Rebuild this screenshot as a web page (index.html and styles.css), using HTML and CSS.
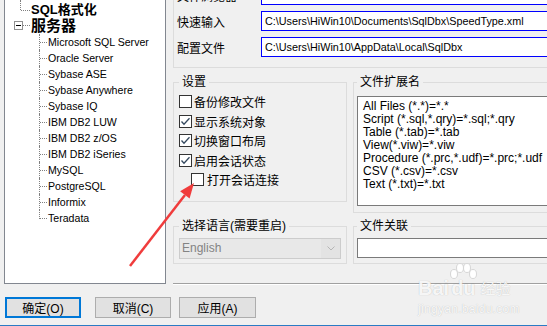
FILE: index.html
```html
<!DOCTYPE html>
<html lang="zh">
<head>
    <meta charset="UTF-8">
    <title>选项</title>
    <link rel="stylesheet" href="styles.css">
</head>
<body>
    <div class="dialog">
        <div class="main">
            <div class="tree">
                <ul class="tree-root">
                    <li class="tree-node first-node">
                        <div class="row"><span class="bold">SQL格式化</span></div>
                    </li>
                    <li class="tree-node open-node">
                        <div class="row"><span class="toggle"></span><span class="bold big">服务器</span></div>
                        <ul class="tree-children">
                            <li><div class="row">Microsoft SQL Server</div></li>
                            <li><div class="row">Oracle Server</div></li>
                            <li><div class="row">Sybase ASE</div></li>
                            <li><div class="row">Sybase Anywhere</div></li>
                            <li><div class="row">Sybase IQ</div></li>
                            <li><div class="row">IBM DB2 LUW</div></li>
                            <li><div class="row">IBM DB2 z/OS</div></li>
                            <li><div class="row">IBM DB2 iSeries</div></li>
                            <li><div class="row">MySQL</div></li>
                            <li><div class="row">PostgreSQL</div></li>
                            <li><div class="row">Informix</div></li>
                            <li><div class="row">Teradata</div></li>
                        </ul>
                    </li>
                </ul>
            </div>

            <div class="settings">
                <div class="paths">
                    <div class="path-row">
                        <label>文件浏览器</label>
                        <input class="path-field" type="text" value="C:\Users\HiWin10\Documents" readonly>
                    </div>
                    <div class="path-row">
                        <label>快速输入</label>
                        <input class="path-field" type="text" value="C:\Users\HiWin10\Documents\SqlDbx\SpeedType.xml" readonly>
                    </div>
                    <div class="path-row">
                        <label>配置文件</label>
                        <input class="path-field" type="text" value="C:\Users\HiWin10\AppData\Local\SqlDbx" readonly>
                    </div>
                </div>

                <div class="group-row">
                    <fieldset class="group options-group">
                        <legend>设置</legend>
                        <label class="check"><span class="box"></span>备份修改文件</label>
                        <label class="check"><span class="box"><svg width="11" height="11" viewBox="0 0 11 11"><polyline points="1.5,5.5 4,8.2 9.5,2.2" fill="none" stroke="#34495f" stroke-width="1.3"/></svg></span>显示系统对象</label>
                        <label class="check"><span class="box"><svg width="11" height="11" viewBox="0 0 11 11"><polyline points="1.5,5.5 4,8.2 9.5,2.2" fill="none" stroke="#34495f" stroke-width="1.3"/></svg></span>切换窗口布局</label>
                        <label class="check"><span class="box"><svg width="11" height="11" viewBox="0 0 11 11"><polyline points="1.5,5.5 4,8.2 9.5,2.2" fill="none" stroke="#34495f" stroke-width="1.3"/></svg></span>启用会话状态</label>
                        <label class="check sub"><span class="box"></span>打开会话连接</label>
                    </fieldset>
                    <fieldset class="group ext-group">
                        <legend>文件扩展名</legend>
                        <div class="ext-list">
                            <div>All Files (*.*)=*.*</div>
                            <div>Script (*.sql,*.qry)=*.sql;*.qry</div>
                            <div>Table (*.tab)=*.tab</div>
                            <div>View(*.viw)=*.viw</div>
                            <div>Procedure (*.prc,*.udf)=*.prc;*.udf</div>
                            <div>CSV (*.csv)=*.csv</div>
                            <div>Text (*.txt)=*.txt</div>
                        </div>
                    </fieldset>
                </div>

                <div class="group-row lower">
                    <fieldset class="group lang-group">
                        <legend>选择语言(需要重启)</legend>
                        <div class="combo">
                            <span class="combo-text">English</span>
                            <span class="combo-arrow"><svg width="8" height="5" viewBox="0 0 8 5"><polyline points="0.5,0.5 4,4 7.5,0.5" fill="none" stroke="#b5b5b5" stroke-width="1"/></svg></span>
                        </div>
                    </fieldset>
                    <fieldset class="group assoc-group">
                        <legend>文件关联</legend>
                        <div class="assoc-field"></div>
                    </fieldset>
                </div>
                <div class="separator"></div>
            </div>
        </div>

        <div class="buttons">
            <button class="btn default">确定(O)</button>
            <button class="btn">取消(C)</button>
            <button class="btn wide">应用(A)</button>
        </div>

        <svg class="arrow" width="547" height="326" viewBox="0 0 547 326">
            <line x1="130" y1="266" x2="185" y2="195" stroke="#f03c3c" stroke-width="2.5"/>
            <polygon points="194,183 189.6,198.5 180.1,191.2" fill="#f03c3c"/>
        </svg>

        <div class="watermark">
            <div class="wm-logo">
                <span class="wm-bai">Bai</span>
                <span class="wm-du">
                    <svg class="wm-paw" width="28" height="16" viewBox="0 0 28 16">
                        <ellipse cx="5" cy="11" rx="3.5" ry="4.5" fill="#fff" stroke="#d6d6d6"/>
                        <ellipse cx="11" cy="5" rx="3.5" ry="4.5" fill="#fff" stroke="#d6d6d6"/>
                        <ellipse cx="18" cy="5" rx="3.5" ry="4.5" fill="#fff" stroke="#d6d6d6"/>
                        <ellipse cx="24" cy="11" rx="3.5" ry="4.5" fill="#fff" stroke="#d6d6d6"/>
                    </svg>
                    du
                </span>
                <span class="wm-cn">经验</span>
            </div>
            <div class="wm-url">jingyan.baidu.com</div>
        </div>
    </div>
</body>
</html>
```

FILE: styles.css
```css
* {
    box-sizing: border-box;
}

body {
    margin: 0;
    background-color: #f0f0f0;
    font-family: "Liberation Sans", "Noto Sans CJK SC", sans-serif;
    font-size: 12px;
    color: #000;
    overflow: hidden;
}

.dialog {
    position: relative;
    width: 547px;
    height: 326px;
    border-bottom: 1px solid #2b7bc4;
    overflow: hidden;
}

.main {
    display: flex;
    align-items: flex-start;
    gap: 7px;
    height: 284px;
    padding-left: 4px;
}

/* tree */
.tree {
    width: 162px;
    height: 284px;
    flex-shrink: 0;
    background-color: #fff;
    border: 1px solid #828790;
    border-top: none;
    padding-top: 2px;
}
.tree ul {
    list-style: none;
    margin: 0;
    padding: 0;
}
.tree .row {
    position: relative;
    height: 16px;
    line-height: 16px;
    white-space: nowrap;
}
.tree-node > .row {
    padding-left: 26px;
}
.bold {
    font-weight: bold;
    font-size: 13px;
}
.big {
    font-size: 15px;
}
.first-node > .row::before {
    content: "";
    position: absolute;
    left: 15px;
    top: -2px;
    height: 10px;
    border-left: 1px dotted #808080;
}
.first-node > .row::after {
    content: "";
    position: absolute;
    left: 16px;
    top: 8px;
    width: 9px;
    border-top: 1px dotted #808080;
}
.toggle {
    position: absolute;
    left: 9px;
    top: 3px;
    width: 9px;
    height: 9px;
    border: 1px solid #919191;
    background-color: #fff;
}
.toggle::before {
    content: "";
    position: absolute;
    left: 1px;
    top: 3px;
    width: 5px;
    border-top: 1px solid #000;
}
.open-node > .row::after {
    content: "";
    position: absolute;
    left: 18px;
    top: 7px;
    width: 7px;
    border-top: 1px dotted #808080;
}
.tree-children > li > .row {
    padding-left: 43px;
    font-size: 10.6px;
}
.tree-children > li > .row::before {
    content: "";
    position: absolute;
    left: 34px;
    top: 0;
    height: 16px;
    border-left: 1px dotted #808080;
}
.tree-children > li:last-child > .row::before {
    height: 9px;
}
.tree-children > li > .row::after {
    content: "";
    position: absolute;
    left: 35px;
    top: 8px;
    width: 7px;
    border-top: 1px dotted #808080;
}

/* right side */
.settings {
    width: 420px;
    flex-shrink: 0;
}
.paths {
    margin-top: -26px;
    border: 1px solid #dcdcdc;
    border-right: none;
    padding: 10px 0 10px 3px;
    display: flex;
    flex-direction: column;
    gap: 6px;
}
.path-row {
    display: flex;
    align-items: center;
    height: 20px;
}
.path-row label {
    width: 84px;
    flex-shrink: 0;
}
.path-field {
    flex: 1;
    min-width: 0;
    height: 20px;
    margin: 0;
    border: 1px solid #0000ff;
    background-color: #fff;
    padding: 0 3px;
    font-family: "Liberation Sans", sans-serif;
    font-size: 10.8px;
    color: #000;
    outline: none;
}

.group-row {
    display: flex;
    align-items: flex-start;
    gap: 6px;
    margin-top: 7px;
}
.group-row.lower {
    margin-top: 6px;
}
.group {
    margin: 0;
    min-width: 0;
    border: 1px solid #dcdcdc;
}
.group legend {
    padding: 0 3px;
    line-height: 15px;
    font-size: 12px;
}
.options-group {
    width: 174px;
    flex-shrink: 0;
    padding: 2px 0 11.5px 5px;
}
.ext-group {
    flex: 1;
    padding: 6px 0 6px 3px;
    border-right: none;
}
.ext-list {
    height: 110px;
    background-color: #fff;
    border: 1px solid #7a7a7a;
    border-right: none;
    padding: 3px 0 0 5px;
    font-size: 12px;
    line-height: 13px;
    white-space: nowrap;
}
.check {
    display: flex;
    align-items: center;
    gap: 2px;
    height: 19.5px;
}
.check.sub {
    padding-left: 12px;
    gap: 3px;
}
.box {
    width: 13px;
    height: 13px;
    flex-shrink: 0;
    display: flex;
    align-items: center;
    justify-content: center;
    border: 1px solid #333;
    background-color: #fff;
}

.lang-group {
    width: 174px;
    flex-shrink: 0;
    padding: 4px 0 4px 5px;
}
.combo {
    display: flex;
    width: 162px;
    height: 21px;
    border: 1px solid #cccccc;
    background-color: #e8e8e8;
}
.combo-text {
    flex: 1;
    padding-left: 2px;
    line-height: 19px;
    color: #838383;
}
.combo-arrow {
    width: 19px;
    display: flex;
    align-items: center;
    justify-content: center;
    background-color: #e3e3e3;
}
.assoc-group {
    flex: 1;
    padding: 4px 0 5px 3px;
    border-right: none;
}
.assoc-field {
    height: 20px;
    background-color: #fff;
    border: 1px solid #7a7a7a;
    border-right: none;
}
.separator {
    margin-top: 19px;
    border-top: 1px solid #a0a0a0;
    border-bottom: 1px solid #fff;
}

/* buttons */
.buttons {
    display: flex;
    gap: 8px;
    padding: 13px 0 0 5px;
}
.btn {
    width: 76px;
    height: 21px;
    padding: 0;
    background-color: #e1e1e1;
    border: 1px solid #adadad;
    font-family: "Liberation Sans", "Noto Sans CJK SC", sans-serif;
    font-size: 12px;
    color: #000;
}
.btn.default {
    border: 2px solid #0078d7;
    margin-right: 6px;
}
.btn.wide {
    width: 77px;
}

/* overlays */
.arrow {
    position: absolute;
    left: 0;
    top: 0;
    pointer-events: none;
}
.watermark {
    position: absolute;
    left: 418px;
    top: 265px;
    color: rgba(255, 255, 255, 0.9);
    text-shadow: 0 0 1px rgba(0, 0, 0, 0.25);
    pointer-events: none;
}
.wm-logo {
    display: flex;
    align-items: flex-end;
    height: 33px;
}
.wm-bai,
.wm-du {
    font-size: 20px;
    font-weight: bold;
    line-height: 20px;
}
.wm-du {
    position: relative;
    padding: 0 2px;
}
.wm-paw {
    position: absolute;
    left: 0;
    top: -15px;
}
.wm-cn {
    font-size: 15px;
    line-height: 18px;
    margin-left: 3px;
}
.wm-url {
    margin-top: 4px;
    font-size: 12px;
    letter-spacing: 0.3px;
}
```
